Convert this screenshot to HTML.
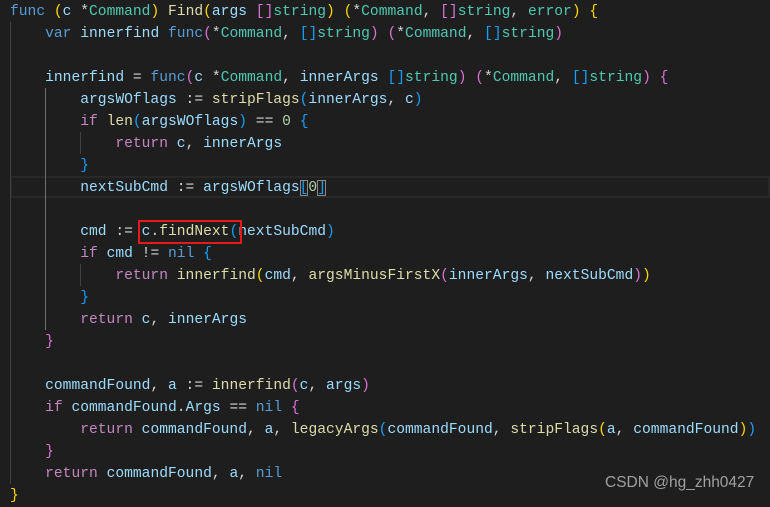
<!DOCTYPE html>
<html><head><meta charset="utf-8"><style>
body{margin:0;background:#1e1e1e;width:770px;height:503px;overflow:hidden;position:relative}
.code{position:absolute;left:10px;top:1px;font-family:"Liberation Mono",monospace;font-size:14.63px;line-height:22px;color:#d4d4d4;white-space:pre}
.k{color:#569cd6}.c{color:#c586c0}.v{color:#9cdcfe}.f{color:#dcdcaa}.t{color:#4ec9b0}.n{color:#b5cea8}
.b1{color:#ffd700}.b2{color:#da70d6}.b3{color:#179fff}
.g{position:absolute;width:1px;background:#404040}
.bm{outline:1px solid #888;outline-offset:-1px}
</style></head><body>
<div style="position:absolute;left:10px;right:0;top:176px;height:22px;box-sizing:border-box;border:2px solid #282828"></div>
<div class="g" style="left:10px;top:22px;height:462px"></div>
<div class="g" style="left:45px;top:88px;height:242px;background:#707070"></div>
<div class="g" style="left:80px;top:132px;height:22px"></div>
<div class="g" style="left:80px;top:264px;height:22px"></div>
<div class="code"><span class="k">func</span> <span class="b1">(</span><span class="v">c</span> *<span class="t">Command</span><span class="b1">)</span> <span class="f">Find</span><span class="b1">(</span><span class="v">args</span> <span class="b2">[]</span><span class="t">string</span><span class="b1">)</span> <span class="b1">(</span>*<span class="t">Command</span>, <span class="b2">[]</span><span class="t">string</span>, <span class="t">error</span><span class="b1">)</span> <span class="b1">{</span>
    <span class="k">var</span> <span class="v">innerfind</span> <span class="k">func</span><span class="b2">(</span>*<span class="t">Command</span>, <span class="b3">[]</span><span class="t">string</span><span class="b2">)</span> <span class="b2">(</span>*<span class="t">Command</span>, <span class="b3">[]</span><span class="t">string</span><span class="b2">)</span>

    <span class="v">innerfind</span> = <span class="k">func</span><span class="b2">(</span><span class="v">c</span> *<span class="t">Command</span>, <span class="v">innerArgs</span> <span class="b3">[]</span><span class="t">string</span><span class="b2">)</span> <span class="b2">(</span>*<span class="t">Command</span>, <span class="b3">[]</span><span class="t">string</span><span class="b2">)</span> <span class="b2">{</span>
        <span class="v">argsWOflags</span> := <span class="f">stripFlags</span><span class="b3">(</span><span class="v">innerArgs</span>, <span class="v">c</span><span class="b3">)</span>
        <span class="c">if</span> <span class="f">len</span><span class="b3">(</span><span class="v">argsWOflags</span><span class="b3">)</span> == <span class="n">0</span> <span class="b3">{</span>
            <span class="c">return</span> <span class="v">c</span>, <span class="v">innerArgs</span>
        <span class="b3">}</span>
        <span class="v">nextSubCmd</span> := <span class="v">argsWOflags</span><span class="b3 bm">[</span><span class="n">0</span><span class="b3 bm">]</span>

        <span class="v">cmd</span> := <span style="outline:2px solid #e51a1a;outline-offset:2px"><span class="v">c</span>.<span class="f">findNext</span><span class="b3">(</span></span><span class="v">nextSubCmd</span><span class="b3">)</span>
        <span class="c">if</span> <span class="v">cmd</span> != <span class="k">nil</span> <span class="b3">{</span>
            <span class="c">return</span> <span class="f">innerfind</span><span class="b1">(</span><span class="v">cmd</span>, <span class="f">argsMinusFirstX</span><span class="b2">(</span><span class="v">innerArgs</span>, <span class="v">nextSubCmd</span><span class="b2">)</span><span class="b1">)</span>
        <span class="b3">}</span>
        <span class="c">return</span> <span class="v">c</span>, <span class="v">innerArgs</span>
    <span class="b2">}</span>

    <span class="v">commandFound</span>, <span class="v">a</span> := <span class="f">innerfind</span><span class="b2">(</span><span class="v">c</span>, <span class="v">args</span><span class="b2">)</span>
    <span class="c">if</span> <span class="v">commandFound</span>.<span class="v">Args</span> == <span class="k">nil</span> <span class="b2">{</span>
        <span class="c">return</span> <span class="v">commandFound</span>, <span class="v">a</span>, <span class="f">legacyArgs</span><span class="b3">(</span><span class="v">commandFound</span>, <span class="f">stripFlags</span><span class="b1">(</span><span class="v">a</span>, <span class="v">commandFound</span><span class="b1">)</span><span class="b3">)</span>
    <span class="b2">}</span>
    <span class="c">return</span> <span class="v">commandFound</span>, <span class="v">a</span>, <span class="k">nil</span>
<span class="b1">}</span></div>
<div style="position:absolute;left:605px;top:474px;font-family:'Liberation Sans',sans-serif;font-size:15.5px;color:#a0a0a0;white-space:nowrap">CSDN @hg_zhh0427</div>
</body></html>
